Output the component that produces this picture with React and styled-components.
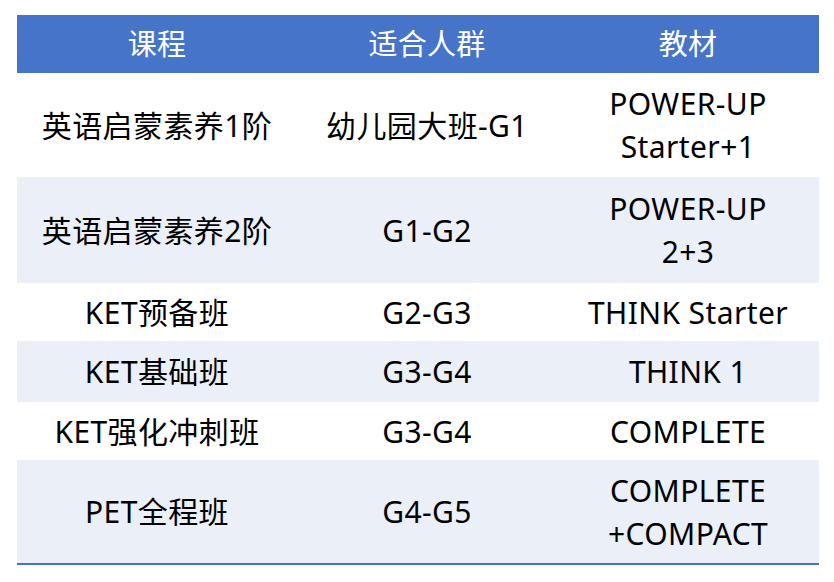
import React from 'react'
import styled, { createGlobalStyle } from 'styled-components'

const GlobalStyle = createGlobalStyle`
  html, body {
    margin: 0;
    padding: 0;
    background: #ffffff;
  }
  body {
    font-family: "Noto Sans", "Noto Sans CJK SC", sans-serif;
  }
`

const rows = [
  { course: '英语启蒙素养1阶', age: '幼儿园大班-G1', book: ['POWER-UP', 'Starter+1'], h: 104 },
  { course: '英语启蒙素养2阶', age: 'G1-G2', book: ['POWER-UP', '2+3'], h: 106 },
  { course: 'KET预备班', age: 'G2-G3', book: ['THINK Starter'], h: 58 },
  { course: 'KET基础班', age: 'G3-G4', book: ['THINK 1'], h: 61 },
  { course: 'KET强化冲刺班', age: 'G3-G4', book: ['COMPLETE'], h: 58 },
  { course: 'PET全程班', age: 'G4-G5', book: ['COMPLETE', '+COMPACT'], h: 104 },
]

const App = () => {
  return (
    <Page>
      <GlobalStyle />
      <Table>
        <colgroup>
          <col style={{ width: 280 }} />
          <col style={{ width: 260 }} />
          <col style={{ width: 262 }} />
        </colgroup>
        <thead>
          <tr>
            <HeadCell>课程</HeadCell>
            <HeadCell>适合人群</HeadCell>
            <HeadCell>教材</HeadCell>
          </tr>
        </thead>
        <tbody>
          {rows.map((r, i) => (
            <Row key={r.course} $alt={i % 2 === 1} style={{ height: r.h }}>
              <Cell>{r.course}</Cell>
              <Cell>{r.age}</Cell>
              <Cell>
                {r.book.map((line) => (
                  <Line key={line}>{line}</Line>
                ))}
              </Cell>
            </Row>
          ))}
        </tbody>
      </Table>
    </Page>
  )
}

export default App

const Page = styled.div`
  padding: 15px 15px 0 17px;
`

const Table = styled.table`
  width: 802px;
  border-collapse: collapse;
  table-layout: fixed;
  border-bottom: 2px solid #4472c4;
`

const HeadCell = styled.th`
  height: 58px;
  padding: 0;
  background: #4674c9;
  color: #ffffff;
  font-size: 29px;
  font-weight: 400;
  text-align: center;
  vertical-align: middle;
  line-height: 40px;
  letter-spacing: 0.3px;
`

const Row = styled.tr`
  background: ${(p) => (p.$alt ? '#eaeff8' : '#ffffff')};
`

const Cell = styled.td`
  padding: 0;
  color: #000000;
  font-size: 30px;
  letter-spacing: 0.4px;
  text-align: center;
  vertical-align: middle;
  line-height: 43px;
`

const Line = styled.div`
  white-space: nowrap;
`
